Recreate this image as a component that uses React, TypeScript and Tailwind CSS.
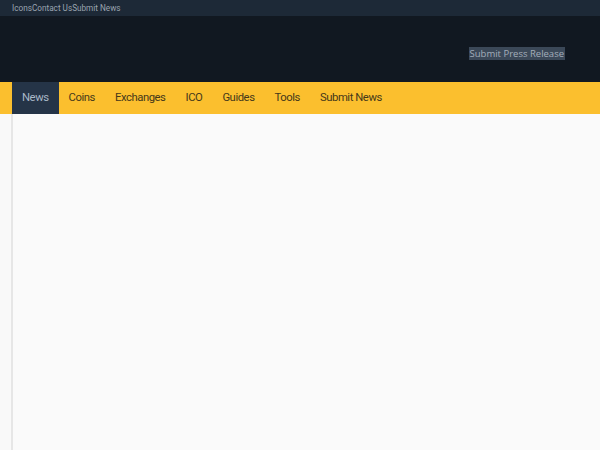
export default function App() {
  const navItems = ["News", "Coins", "Exchanges", "ICO", "Guides", "Tools", "Submit News"];
  const topLinks = ["Icons", "Contact Us", "Submit News"];

  return (
    <div className="w-[600px] h-[450px] overflow-hidden bg-[#f9f9f9] font-['Roboto',sans-serif]">
      {/* top strip */}
      <div className="h-[16px] bg-[#1d2937] flex items-center px-[12px]">
        {topLinks.map((l) => (
          <a key={l} className="text-[8.2px] leading-none text-[#9aa4b0]">
            {l}
          </a>
        ))}
      </div>

      {/* header */}
      <div className="h-[66px] bg-[#111821] flex items-center justify-end pr-[35px] pt-[8px]">
        <span className="bg-[#3b4858] text-[#a3aebb] text-[9.5px] leading-[13px] px-[1px] font-['Open_Sans',sans-serif]">
          Submit Press Release
        </span>
      </div>

      {/* nav */}
      <nav className="h-[32px] bg-[#fbbf2e] flex pl-[12px]">
        {navItems.map((item, i) => (
          <a
            key={item}
            className={
              i === 0
                ? "h-full flex items-center px-[10px] bg-[#253447] text-[#a9b8c8] text-[11.3px] tracking-[-0.45px]"
                : "h-full flex items-center px-[10px] text-[#45381a] text-[11.3px] tracking-[-0.45px]"
            }
          >
            {item}
          </a>
        ))}
      </nav>

      {/* main */}
      <div className="h-[336px] pl-[11px]">
        <div className="h-full border-l-2 border-[#e6e6e6] bg-[#fafafa]" />
      </div>
    </div>
  );
}
